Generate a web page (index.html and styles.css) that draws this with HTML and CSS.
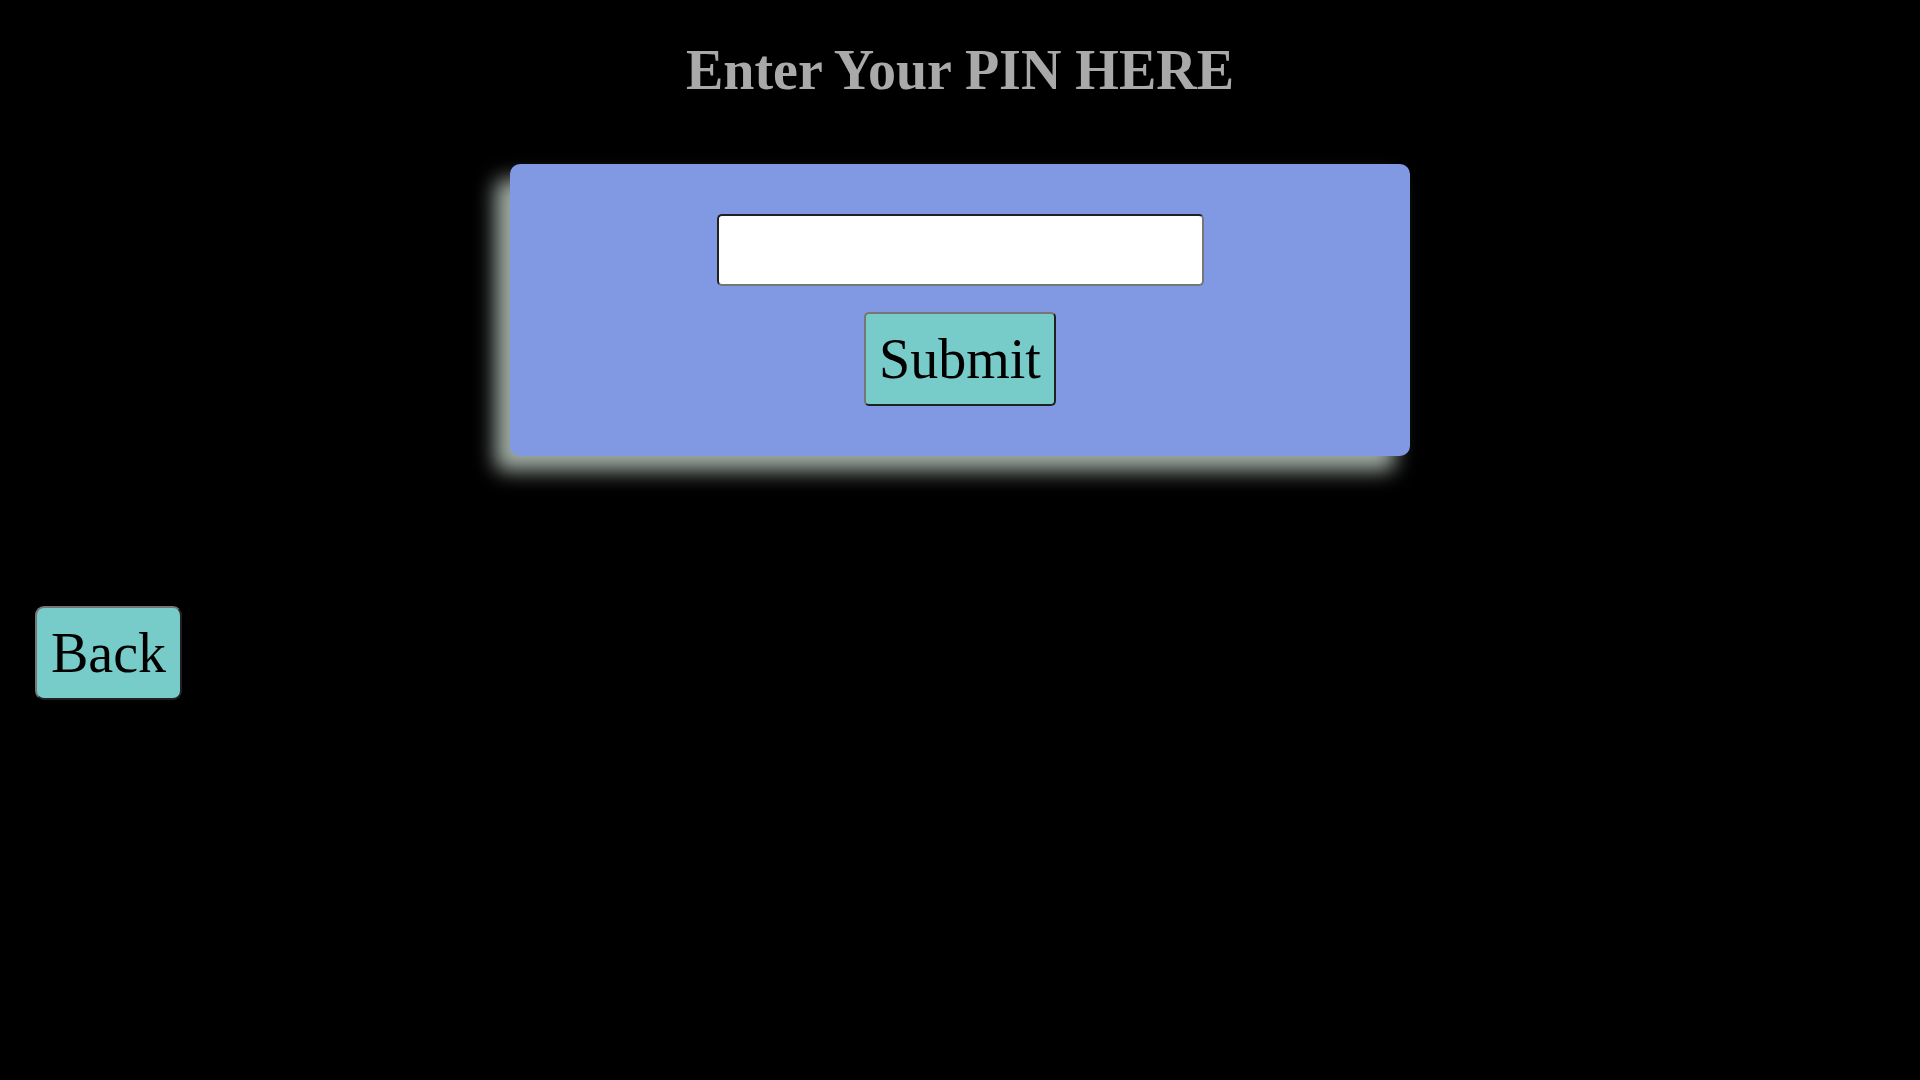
FILE: index.html
```html
<!DOCTYPE html>
<html lang="en">
<head>
<meta charset="utf-8">
<title>Enter PIN</title>
<link rel="stylesheet" href="styles.css">
</head>
<body>
  <h1 class="title">Enter Your PIN HERE</h1>
  <div class="card">
    <input class="pin-input" type="password" aria-label="PIN">
    <button class="btn btn-submit" type="button">Submit</button>
  </div>
  <div class="back-row">
    <button class="btn btn-back" type="button">Back</button>
  </div>
</body>
</html>
```

FILE: styles.css
```css
html, body {
  margin: 0;
  padding: 0;
  background: #000;
}

body {
  font-family: "Liberation Serif", "Times New Roman", serif;
  min-height: 1080px;
}

.title {
  margin: 0;
  padding-top: 38px;
  font-size: 56px;
  font-weight: bold;
  line-height: normal;
  text-align: center;
  color: #a9a9a9;
}

.card {
  width: 900px;
  box-sizing: border-box;
  margin: 62px auto 0;
  padding: 50px 0;
  background: #8199e3;
  border-radius: 10px;
  box-shadow: -15px 15px 20px rgb(158, 170, 162);
  display: flex;
  flex-direction: column;
  align-items: center;
  gap: 26px;
}

.pin-input {
  width: 487px;
  height: 72px;
  box-sizing: border-box;
  border: 2px inset #767676;
  border-radius: 5px;
  background: #fff;
  font-family: "Liberation Serif", serif;
  font-size: 40px;
  padding: 0 8px;
  outline: none;
}

.btn {
  font-family: "Liberation Serif", "Times New Roman", serif;
  font-size: 56px;
  line-height: normal;
  color: #000;
  background: #77cbc9;
  border: 2px outset #767676;
  padding: 13px 13px;
  cursor: pointer;
}

.btn-submit {
  border-radius: 5px;
}

.back-row {
  display: flex;
  padding: 150px 0 0 35px;
}

.btn-back {
  border-radius: 9px;
  padding: 13px 14px;
}
```
